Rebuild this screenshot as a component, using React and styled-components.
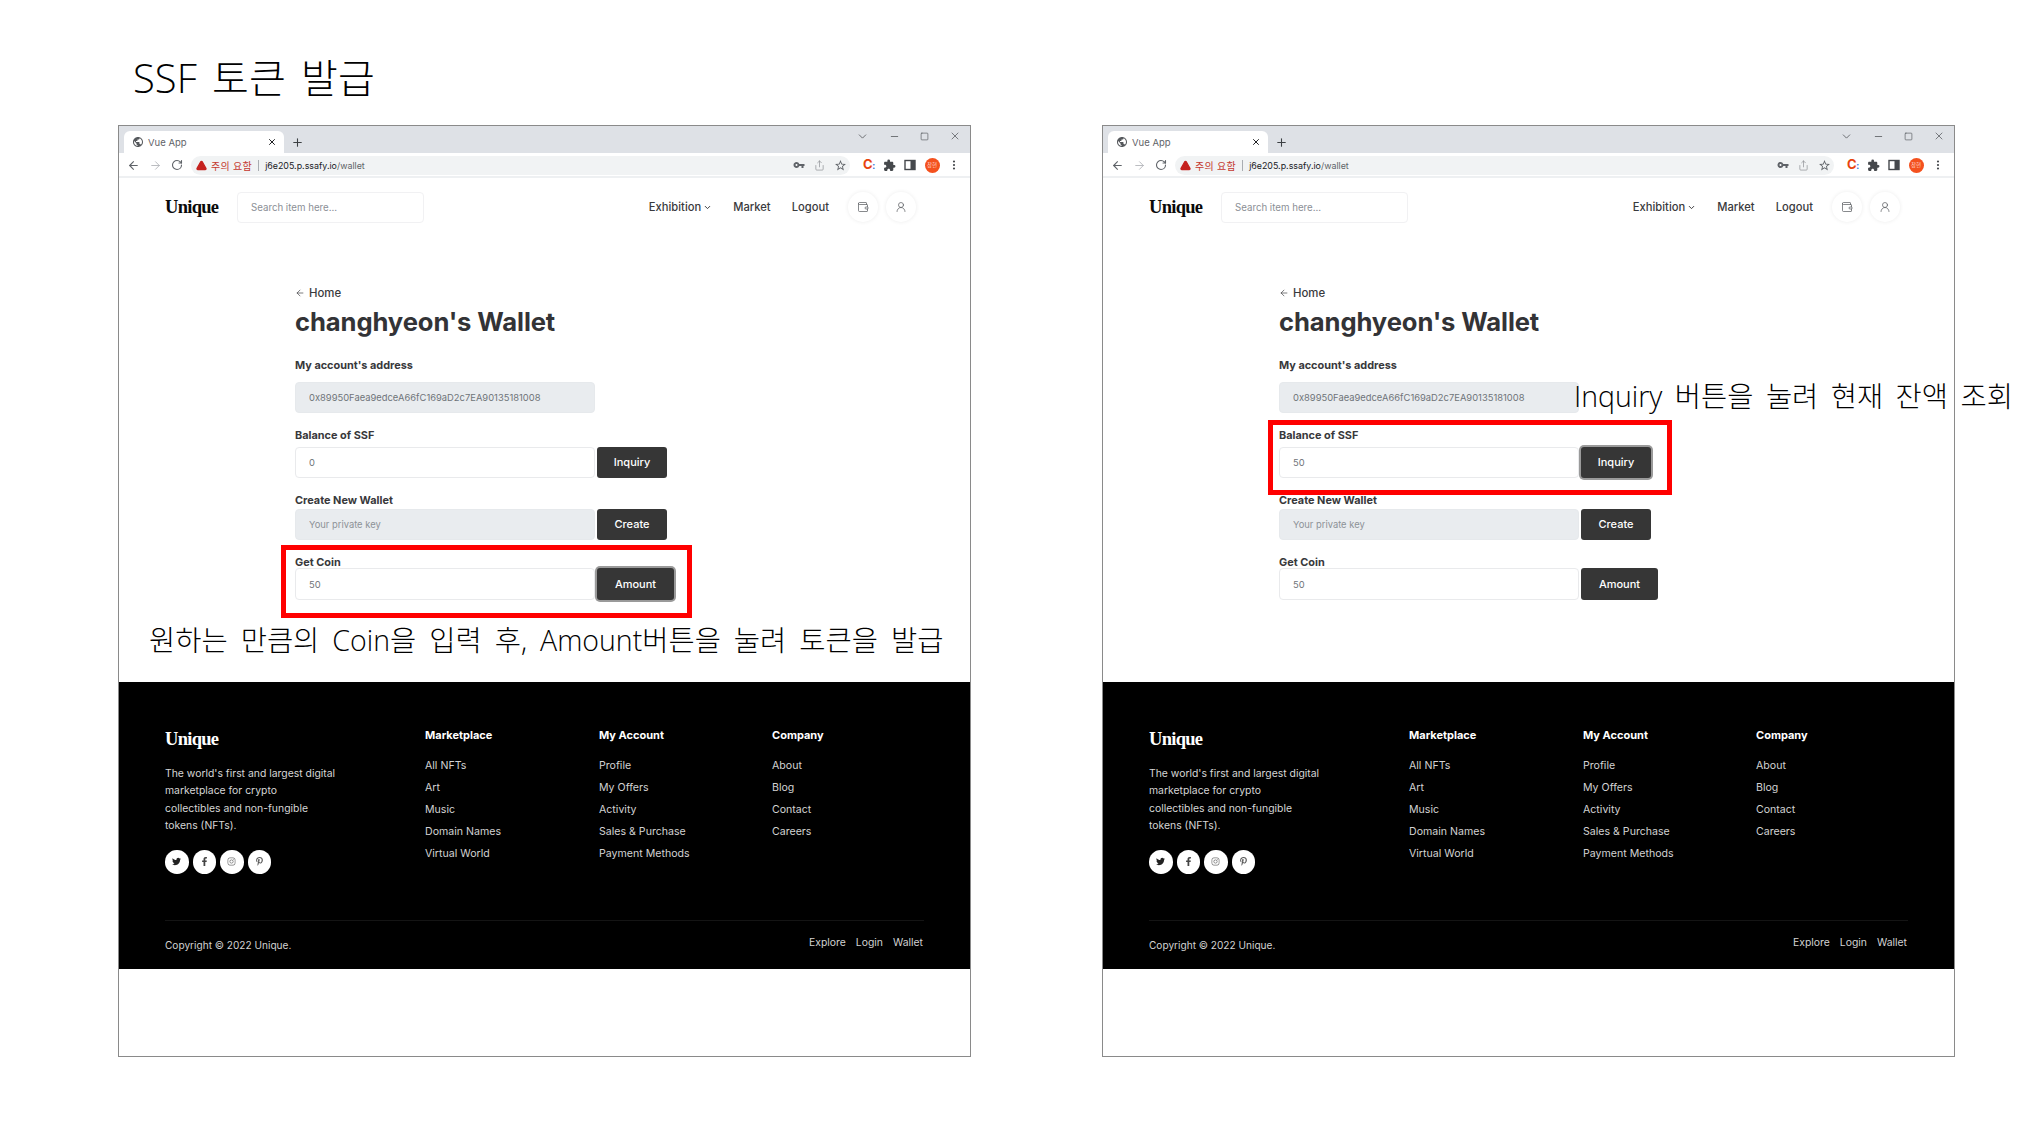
import React from "react";
import styled, { createGlobalStyle } from "styled-components";
import {
  ArrowLeft,
  ArrowRight,
  RotateCw,
  Share,
  EllipsisVertical,
  X,
  Plus,
  Minus,
  Square,
  ChevronDown,
  TriangleAlert,
  Wallet,
  UserRound,
} from "lucide-react";
import { FaTwitter, FaFacebookF, FaInstagram, FaPinterestP } from "react-icons/fa";
import { MdPublic, MdVpnKey, MdExtension, MdStarBorder } from "react-icons/md";

const GlobalStyle = createGlobalStyle`
  html, body {
    margin: 0;
    background: #fff;
  }
  * {
    box-sizing: border-box;
  }
`;

const UI_FONT = `"Inter", "Noto Sans CJK KR", sans-serif`;
const SLIDE_FONT = `"Open Sans", "Noto Sans CJK KR", sans-serif`;

const Slide = styled.div`
  width: 2031px;
  height: 1137px;
  overflow: hidden;
  background: #fff;
  padding: 51px 0 0 118px;
  font-family: ${UI_FONT};
`;

const SlideTitle = styled.h1`
  margin: 0 0 21px 15px;
  height: 53px;
  line-height: 53px;
  font-family: ${SLIDE_FONT};
  font-size: 40px;
  font-weight: 300;
  word-spacing: 5px;
  color: #000;
`;

const Windows = styled.div`
  display: flex;
  gap: 131px;
`;

const BrowserWindow = styled.div`
  position: relative;
  width: 853px;
  height: 932px;
  border: 1px solid #8a8a8a;
  background: #fff;
  flex-shrink: 0;
`;

const TabStrip = styled.div`
  height: 27px;
  background: #dee1e6;
  display: flex;
  align-items: flex-end;
  padding-left: 5px;
  color: #3c4043;
`;

const Tab = styled.div`
  width: 160px;
  height: 22px;
  background: #fff;
  border-radius: 6px 6px 0 0;
  display: flex;
  align-items: center;
  padding: 0 7px 0 8px;
  font-size: 9.5px;
  color: #5f6368;
  svg:first-child {
    color: #55585c;
  }
  svg:last-child {
    margin-left: auto;
    color: #202124;
  }
`;

const TabTitle = styled.span`
  margin-left: 4px;
`;

const NewTab = styled.div`
  margin: 0 0 4px 7px;
  display: flex;
`;

const WindowControls = styled.div`
  margin-left: auto;
  align-self: flex-start;
  display: flex;
  align-items: center;
  gap: 20px;
  height: 20px;
  padding-right: 9px;
  color: #4a4d51;
`;

const Toolbar = styled.div`
  height: 25px;
  display: flex;
  align-items: center;
  padding: 1px 10px 0 8px;
  border-bottom: 2px solid #eef0f2;
  color: #5f6368;
`;

const NavButtons = styled.div`
  display: flex;
  align-items: center;
  gap: 9px;
`;

const Omnibox = styled.div`
  width: 664px;
  height: 19px;
  margin-left: 8px;
  background: #f1f3f4;
  border-radius: 10px;
  display: flex;
  align-items: center;
  padding: 0 3px 0 5px;
  font-size: 10px;
`;

const Warning = styled.span`
  margin-left: 4px;
  color: #c5392f;
  letter-spacing: 0.3px;
`;

const Divider = styled.span`
  width: 1px;
  height: 11px;
  background: #a9adb2;
  margin: 0 6px;
`;

const Url = styled.span`
  color: #202124;
  font-size: 8.9px;
  b {
    font-weight: 400;
    color: #5f6368;
  }
`;

const OmniActions = styled.div`
  margin-left: auto;
  display: flex;
  gap: 9px;
  align-items: center;
`;

const Extensions = styled.div`
  margin-left: 13px;
  display: flex;
  align-items: center;
  gap: 8.5px;
  color: #45484c;
`;

const ExtensionMark = styled.span`
  font-size: 13px;
  font-weight: 700;
  color: #e8430f;
  width: 11px;
  line-height: 13px;
  letter-spacing: -0.5px;
  white-space: nowrap;
  i {
    font-style: normal;
    color: #2b6cd4;
    font-size: 9px;
  }
`;

const Avatar = styled.span`
  width: 15px;
  height: 15px;
  border-radius: 50%;
  background: #f4511e;
  color: #ffd9cc;
  font-size: 5.5px;
  display: flex;
  align-items: center;
  justify-content: center;
`;

const PageHeader = styled.header`
  height: 58px;
  display: flex;
  align-items: center;
  padding: 0 54px 0 46px;
`;

const Logo = styled.div`
  font-family: "Liberation Serif", serif;
  font-weight: 700;
  font-size: 18.5px;
  letter-spacing: -0.7px;
  color: ${(p) => (p.$light ? "#fff" : "#0a0a0a")};
  width: 72px;
  line-height: 24px;
`;

const SearchBox = styled.div`
  width: 187px;
  height: 31px;
  border: 1px solid #f1f1f3;
  border-radius: 4px;
  padding-left: 13px;
  display: flex;
  align-items: center;
  font-size: 9.7px;
  color: #8b8f96;
`;

const Nav = styled.nav`
  margin-left: auto;
  display: flex;
  align-items: center;
`;

const NavLink = styled.a`
  font-size: 11.2px;
  font-weight: 500;
  color: #3a3a3d;
  margin-right: 21px;
  display: flex;
  align-items: center;
  gap: 2px;
`;

const CircleButton = styled.span`
  width: 30px;
  height: 30px;
  margin-left: ${(p) => p.$left}px;
  border-radius: 50%;
  background: #fff;
  box-shadow: 0 0 4px rgba(0, 0, 0, 0.08);
  display: flex;
  align-items: center;
  justify-content: center;
  color: #55585c;
`;

const Main = styled.main`
  height: 446px;
  padding: 49px 0 0 176px;
`;

const BackLink = styled.a`
  height: 16px;
  display: flex;
  align-items: center;
  gap: 4px;
  font-size: 11.4px;
  font-weight: 500;
  color: #3a3a3d;
`;

const Heading = styled.h2`
  margin: 4px 0 0;
  height: 34px;
  line-height: 34px;
  font-size: 25.6px;
  font-weight: 700;
  color: #333336;
  letter-spacing: -0.1px;
`;

const Field = styled.section`
  margin-top: ${(p) => p.$top}px;
`;

const Label = styled.div`
  height: 12px;
  line-height: 12px;
  font-size: 10.9px;
  font-weight: 700;
  color: #38383b;
  margin-bottom: ${(p) => p.$gap}px;
`;

const Row = styled.div`
  display: flex;
  gap: 2px;
`;

const TextInput = styled.input`
  width: 300px;
  height: ${(p) => p.$h || 31}px;
  border: 1px solid ${(p) => (p.disabled ? "#e6e9ec" : "#e9eaec")};
  border-radius: 4px;
  background: ${(p) => (p.disabled ? "#e9ecef" : "#fff")};
  padding: 0 13px;
  font-family: ${UI_FONT};
  font-size: 9.4px;
  color: #6f7479;
  outline: none;
  &::placeholder {
    color: #8d9297;
  }
`;

const ActionButton = styled.button`
  width: ${(p) => p.$w}px;
  height: ${(p) => p.$h || 31}px;
  border: 0;
  border-radius: 3px;
  background: #363636;
  color: #fff;
  font-family: ${UI_FONT};
  font-size: 11px;
  font-weight: 500;
  padding: 0 0 1px;
  box-shadow: ${(p) => (p.$focused ? "0 0 0 2px #9a9a9a" : "none")};
`;

const Footer = styled.footer`
  height: 287px;
  background: #000;
  padding: 45px 46px 0;
  color: #dcdcdc;
`;

const FooterTop = styled.div`
  height: 193px;
  display: grid;
  grid-template-columns: 260px 174px 173px 1fr;
`;

const Blurb = styled.p`
  margin: 14px 0 0;
  font-size: 10.4px;
  line-height: 17.3px;
  color: #d6d6d6;
`;

const Socials = styled.div`
  display: flex;
  gap: 4px;
  margin-top: 16px;
`;

const SocialIcon = styled.span`
  width: 23.5px;
  height: 23.5px;
  border-radius: 50%;
  background: #fff;
  color: ${(p) => p.$color};
  display: flex;
  align-items: center;
  justify-content: center;
  font-size: 9px;
`;

const ColumnTitle = styled.h4`
  margin: 0 0 15px;
  height: 16px;
  line-height: 16px;
  font-size: 11px;
  font-weight: 700;
  color: #fff;
`;

const FooterLink = styled.div`
  height: 22px;
  line-height: 16px;
  font-size: 10.6px;
  color: #d2d2d2;
`;

const FooterBottom = styled.div`
  border-top: 1px solid #141414;
  display: flex;
  justify-content: space-between;
  padding: 15px 1px 0 0;
  font-size: 10.1px;
  color: #d2d2d2;
`;

const Copyright = styled.span`
  margin-top: 3px;
`;

const LegalLinks = styled.div`
  display: flex;
  gap: 10px;
  font-size: 10.4px;
`;

// 빨간 박스와 설명 문구는 캡처 위에 얹힌 주석이라 absolute
const Highlight = styled.div`
  position: absolute;
  left: ${(p) => p.$x}px;
  top: ${(p) => p.$y}px;
  width: ${(p) => p.$w}px;
  height: ${(p) => p.$h}px;
  border: 5px solid #ff0000;
`;

const Caption = styled.div`
  position: absolute;
  left: ${(p) => p.$x}px;
  top: ${(p) => p.$y}px;
  font-family: ${SLIDE_FONT};
  font-size: 28.5px;
  font-weight: 300;
  word-spacing: ${(p) => p.$spacing}px;
  line-height: 40px;
  white-space: nowrap;
  color: #000;
`;

const SidePanelIcon = () => (
  <svg width="12" height="12" viewBox="0 0 12 12">
    <rect x="1" y="1.5" width="10" height="9" fill="none" stroke="currentColor" strokeWidth="1.4" />
    <rect x="6.5" y="1.5" width="4.5" height="9" fill="currentColor" />
  </svg>
);

const footerColumns = [
  { title: "Marketplace", links: ["All NFTs", "Art", "Music", "Domain Names", "Virtual World"] },
  { title: "My Account", links: ["Profile", "My Offers", "Activity", "Sales & Purchase", "Payment Methods"] },
  { title: "Company", links: ["About", "Blog", "Contact", "Careers"] },
];

const Chrome = () => (
  <>
    <TabStrip>
      <Tab>
        <MdPublic size={12} />
        <TabTitle>Vue App</TabTitle>
        <X size={10} strokeWidth={2.4} />
      </Tab>
      <NewTab>
        <Plus size={13} strokeWidth={2} />
      </NewTab>
      <WindowControls>
        <ChevronDown size={13} strokeWidth={1.4} />
        <Minus size={11} strokeWidth={1.6} />
        <Square size={9} strokeWidth={1.6} />
        <X size={12} strokeWidth={1.4} />
      </WindowControls>
    </TabStrip>
    <Toolbar>
      <NavButtons>
        <ArrowLeft size={13} strokeWidth={2} />
        <ArrowRight size={13} strokeWidth={1.6} color="#b0b3b7" />
        <RotateCw size={12} strokeWidth={2.2} />
      </NavButtons>
      <Omnibox>
        <TriangleAlert size={11} strokeWidth={2.6} color="#c5221f" fill="#c5221f" />
        <Warning>주의 요함</Warning>
        <Divider />
        <Url>
          j6e205.p.ssafy.io<b>/wallet</b>
        </Url>
        <OmniActions>
          <MdVpnKey size={12} />
          <Share size={11} strokeWidth={1.5} color="#8b8e92" />
          <MdStarBorder size={13} />
        </OmniActions>
      </Omnibox>
      <Extensions>
        <ExtensionMark>
          C<i>:</i>
        </ExtensionMark>
        <MdExtension size={13} />
        <SidePanelIcon />
        <Avatar>창현</Avatar>
        <EllipsisVertical size={12} strokeWidth={2.4} />
      </Extensions>
    </Toolbar>
  </>
);

const WalletPage = ({ balance, focused }) => (
  <>
    <PageHeader>
      <Logo>Unique</Logo>
      <SearchBox>Search item here...</SearchBox>
      <Nav>
        <NavLink>
          Exhibition <ChevronDown size={9} strokeWidth={2.6} />
        </NavLink>
        <NavLink>Market</NavLink>
        <NavLink>Logout</NavLink>
        <CircleButton $left={-2}>
          <Wallet size={12} strokeWidth={1.4} />
        </CircleButton>
        <CircleButton $left={8}>
          <UserRound size={12} strokeWidth={1.4} />
        </CircleButton>
      </Nav>
    </PageHeader>
    <Main>
      <BackLink>
        <ArrowLeft size={10} strokeWidth={1.6} /> Home
      </BackLink>
      <Heading>changhyeon's Wallet</Heading>
      <Field $top={20}>
        <Label $gap={11}>My account's address</Label>
        <TextInput disabled value="0x89950Faea9edceA66fC169aD2c7EA90135181008" readOnly />
      </Field>
      <Field $top={16}>
        <Label $gap={6}>Balance of SSF</Label>
        <Row>
          <TextInput value={balance} readOnly />
          <ActionButton $w={70} $focused={focused === "inquiry"}>
            Inquiry
          </ActionButton>
        </Row>
      </Field>
      <Field $top={16}>
        <Label $gap={3}>Create New Wallet</Label>
        <Row>
          <TextInput disabled placeholder="Your private key" readOnly />
          <ActionButton $w={70}>Create</ActionButton>
        </Row>
      </Field>
      <Field $top={16}>
        <Label $gap={0}>Get Coin</Label>
        <Row>
          <TextInput $h={32} value="50" readOnly />
          <ActionButton $w={77} $h={32} $focused={focused === "amount"}>
            Amount
          </ActionButton>
        </Row>
      </Field>
    </Main>
    <Footer>
      <FooterTop>
        <div>
          <Logo $light>Unique</Logo>
          <Blurb>
            The world's first and largest digital
            <br />
            marketplace for crypto
            <br />
            collectibles and non-fungible
            <br />
            tokens (NFTs).
          </Blurb>
          <Socials>
            <SocialIcon $color="#222">
              <FaTwitter />
            </SocialIcon>
            <SocialIcon $color="#444">
              <FaFacebookF />
            </SocialIcon>
            <SocialIcon $color="#777">
              <FaInstagram />
            </SocialIcon>
            <SocialIcon $color="#555">
              <FaPinterestP />
            </SocialIcon>
          </Socials>
        </div>
        {footerColumns.map((col) => (
          <div key={col.title}>
            <ColumnTitle>{col.title}</ColumnTitle>
            {col.links.map((link) => (
              <FooterLink key={link}>{link}</FooterLink>
            ))}
          </div>
        ))}
      </FooterTop>
      <FooterBottom>
        <Copyright>Copyright © 2022 Unique.</Copyright>
        <LegalLinks>
          <span>Explore</span>
          <span>Login</span>
          <span>Wallet</span>
        </LegalLinks>
      </FooterBottom>
    </Footer>
  </>
);

const App = () => (
  <Slide>
    <GlobalStyle />
    <SlideTitle>SSF 토큰 발급</SlideTitle>
    <Windows>
      <BrowserWindow>
        <Chrome />
        <WalletPage balance="0" focused="amount" />
        <Highlight $x={162} $y={419} $w={411} $h={73} />
        <Caption $x={30} $y={494} $spacing={5.6}>
          원하는 만큼의 Coin을 입력 후, Amount버튼을 눌려 토큰을 발급
        </Caption>
      </BrowserWindow>
      <BrowserWindow>
        <Chrome />
        <WalletPage balance="50" focused="inquiry" />
        <Highlight $x={165} $y={294} $w={404} $h={75} />
        <Caption $x={471} $y={250} $spacing={5}>
          Inquiry 버튼을 눌려 현재 잔액 조회
        </Caption>
      </BrowserWindow>
    </Windows>
  </Slide>
);

export default App;
